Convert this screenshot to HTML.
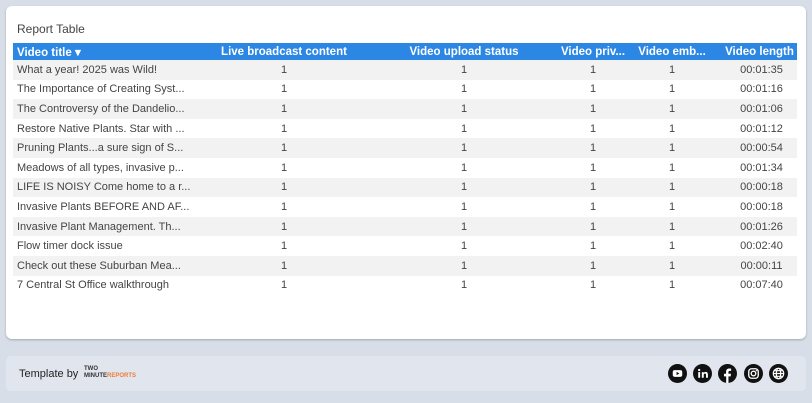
<!DOCTYPE html>
<html><head><style>
body{margin:0;width:812px;height:403px;background:#d7dee8;font-family:"Liberation Sans",sans-serif;position:relative;overflow:hidden}
.card{position:absolute;left:6px;top:6px;width:800px;height:333px;background:#fff;border-radius:6px;box-shadow:0 1px 2px rgba(0,0,0,.25)}
.title{position:absolute;left:11px;top:16px;font-size:12px;color:#444}
table{position:absolute;left:13px;top:43px;width:784px;border-collapse:collapse;font-size:11px;color:#444;table-layout:fixed}
th{background:#2b87e3;color:#fff;font-weight:bold;height:17px;padding:0;font-size:11.5px;white-space:nowrap;overflow:hidden}
td{height:19.6px;padding:0;text-align:center;white-space:nowrap;overflow:hidden}
td:first-child,th:first-child{text-align:left;padding-left:4px}
td:nth-child(3),th:nth-child(3){padding-left:6px}
td:last-child{padding-left:10px}
th:last-child{padding-left:6px}
tr:nth-child(even) td{background:#f2f2f2}
.foot{position:absolute;left:6px;top:356px;width:800px;height:35px;background:#e1e6ee;border-radius:5px}
.tb{position:absolute;left:13px;top:12px;font-size:11px;color:#222}
.logo{position:absolute;left:78px;top:10px;font-size:6px;line-height:7px;font-weight:bold;color:#333}
.ic{position:absolute;top:8px;width:19px;height:19px}
</style></head><body>
<div class="card">
<div class="title">Report Table</div>
</div>
<table>
<colgroup><col style="width:191px"><col style="width:160px"><col style="width:194px"><col style="width:70px"><col style="width:88px"><col></colgroup>
<tr><th>Video title ▾</th><th>Live broadcast content</th><th>Video upload status</th><th>Video priv...</th><th>Video emb...</th><th>Video length</th></tr>
<tr><td>What a year! 2025 was Wild!</td><td>1</td><td>1</td><td>1</td><td>1</td><td>00:01:35</td></tr>
<tr><td>The Importance of Creating Syst...</td><td>1</td><td>1</td><td>1</td><td>1</td><td>00:01:16</td></tr>
<tr><td>The Controversy of the Dandelio...</td><td>1</td><td>1</td><td>1</td><td>1</td><td>00:01:06</td></tr>
<tr><td>Restore Native Plants. Star with ...</td><td>1</td><td>1</td><td>1</td><td>1</td><td>00:01:12</td></tr>
<tr><td>Pruning Plants...a sure sign of S...</td><td>1</td><td>1</td><td>1</td><td>1</td><td>00:00:54</td></tr>
<tr><td>Meadows of all types, invasive p...</td><td>1</td><td>1</td><td>1</td><td>1</td><td>00:01:34</td></tr>
<tr><td>LIFE IS NOISY Come home to a r...</td><td>1</td><td>1</td><td>1</td><td>1</td><td>00:00:18</td></tr>
<tr><td>Invasive Plants BEFORE AND AF...</td><td>1</td><td>1</td><td>1</td><td>1</td><td>00:00:18</td></tr>
<tr><td>Invasive Plant Management. Th...</td><td>1</td><td>1</td><td>1</td><td>1</td><td>00:01:26</td></tr>
<tr><td>Flow timer dock issue</td><td>1</td><td>1</td><td>1</td><td>1</td><td>00:02:40</td></tr>
<tr><td>Check out these Suburban Mea...</td><td>1</td><td>1</td><td>1</td><td>1</td><td>00:00:11</td></tr>
<tr><td>7 Central St Office walkthrough</td><td>1</td><td>1</td><td>1</td><td>1</td><td>00:07:40</td></tr>
</table>
<div class="foot">
<div class="tb">Template by</div>
<div class="logo">TWO<br>MINUTE<span style="color:#f07a3a">REPORTS</span></div>
<svg class="ic" style="left:662px" viewBox="0 0 20 20"><circle cx="10" cy="10" r="10" fill="#111"/><rect x="5" y="6.5" width="10" height="7" rx="2" fill="#fff"/><path d="M9 8.3v3.4l3-1.7z" fill="#111"/></svg>
<svg class="ic" style="left:687px" viewBox="0 0 20 20"><circle cx="10" cy="10" r="10" fill="#111"/><rect x="5.5" y="8.5" width="2" height="6" fill="#fff"/><circle cx="6.5" cy="6.3" r="1.2" fill="#fff"/><path d="M9.3 8.5h1.9v1c.5-.8 1.3-1.2 2.2-1.2 1.5 0 2.3 1 2.3 2.8v3.4h-2v-3.1c0-.9-.3-1.4-1-1.4s-1.4.5-1.4 1.4v3.1h-2z" fill="#fff"/></svg>
<svg class="ic" style="left:712px" viewBox="0 0 20 20"><circle cx="10" cy="10" r="10" fill="#111"/><path d="M11 20v-7h2.3l.4-2.7H11V8.6c0-.8.3-1.300 1.4-1.3h1.4V4.9c-.3 0-1.1-.1-2-.1-2 0-3.3 1.2-3.3 3.4v2.1H6.3V13h2.3v7z" fill="#fff"/></svg>
<svg class="ic" style="left:738px" viewBox="0 0 20 20"><circle cx="10" cy="10" r="10" fill="#111"/><rect x="5" y="5" width="10" height="10" rx="3" fill="none" stroke="#fff" stroke-width="1.4"/><circle cx="10" cy="10" r="2.4" fill="none" stroke="#fff" stroke-width="1.4"/><circle cx="13" cy="7" r=".7" fill="#fff"/></svg>
<svg class="ic" style="left:763px" viewBox="0 0 20 20"><circle cx="10" cy="10" r="10" fill="#111"/><g fill="none" stroke="#fff" stroke-width="1.2"><circle cx="10" cy="10" r="5.5"/><ellipse cx="10" cy="10" rx="2.3" ry="5.5"/><path d="M4.5 10h11M5.5 7h9M5.5 13h9"/></g></svg>
</div>
</body></html>
